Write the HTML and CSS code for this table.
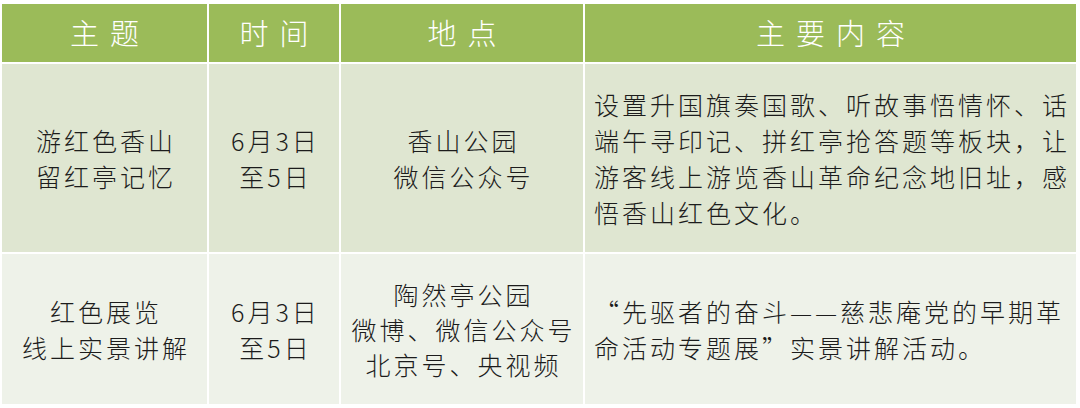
FILE: index.html
```html
<!DOCTYPE html>
<html lang="zh-CN">
<head>
<meta charset="utf-8">
<title>活动安排</title>
<link rel="stylesheet" href="styles.css">
</head>
<body>
<div class="table">
  <div class="cell head">主题</div>
  <div class="cell head">时间</div>
  <div class="cell head">地点</div>
  <div class="cell head">主要内容</div>

  <div class="cell r1 c"><div>游红色香山<br>留红亭记忆</div></div>
  <div class="cell r1 c"><div>6月3日<br>至5日</div></div>
  <div class="cell r1 c"><div>香山公园<br>微信公众号</div></div>
  <div class="cell r1 l"><div>设置升国旗奏国歌、听故事悟情怀、话<br>端午寻印记、拼红亭抢答题等板块，让<br>游客线上游览香山革命纪念地旧址，感<br>悟香山红色文化。</div></div>

  <div class="cell r2 c"><div>红色展览<br>线上实景讲解</div></div>
  <div class="cell r2 c"><div>6月3日<br>至5日</div></div>
  <div class="cell r2 c tight"><div>陶然亭公园<br>微博、微信公众号<br>北京号、央视频</div></div>
  <div class="cell r2 l"><div>“先驱者的奋斗<span class="dash">—</span><span class="dash">—</span>慈悲庵党的早期革<br>命活动专题展”实景讲解活动。</div></div>
</div>
</body>
</html>
```

FILE: styles.css
```css
html, body {
  margin: 0;
  padding: 0;
  background: #ffffff;
}
body {
  padding: 4px 4px 4px 2px;
  font-family: "Noto Sans CJK SC", "Noto Sans", sans-serif;
  font-weight: 300;
  color: #1c1c1c;
}
.table {
  display: grid;
  grid-template-columns: 205px 130px 242px 491px;
  grid-template-rows: 58px 188px 150px;
  gap: 2px;
}
.cell {
  display: flex;
  align-items: center;
  font-size: 25px;
  line-height: 36px;
  letter-spacing: 3px;
  white-space: nowrap;
}
.head {
  background: #9bbb59;
  color: #ffffff;
  justify-content: center;
  font-size: 29px;
  letter-spacing: 11px;
  padding-left: 11px;
  padding-bottom: 2px;
}
.r1 { background: #dfe6d1; }
.r2 { background: #eef2e9; }
.c {
  justify-content: center;
  text-align: center;
  padding-left: 3px;
}
.tight { line-height: 35px; }
.l {
  justify-content: flex-start;
  text-align: left;
  padding-left: 9px;
}
.dash {
  display: inline-block;
  width: 25px;
  text-align: center;
}
```
